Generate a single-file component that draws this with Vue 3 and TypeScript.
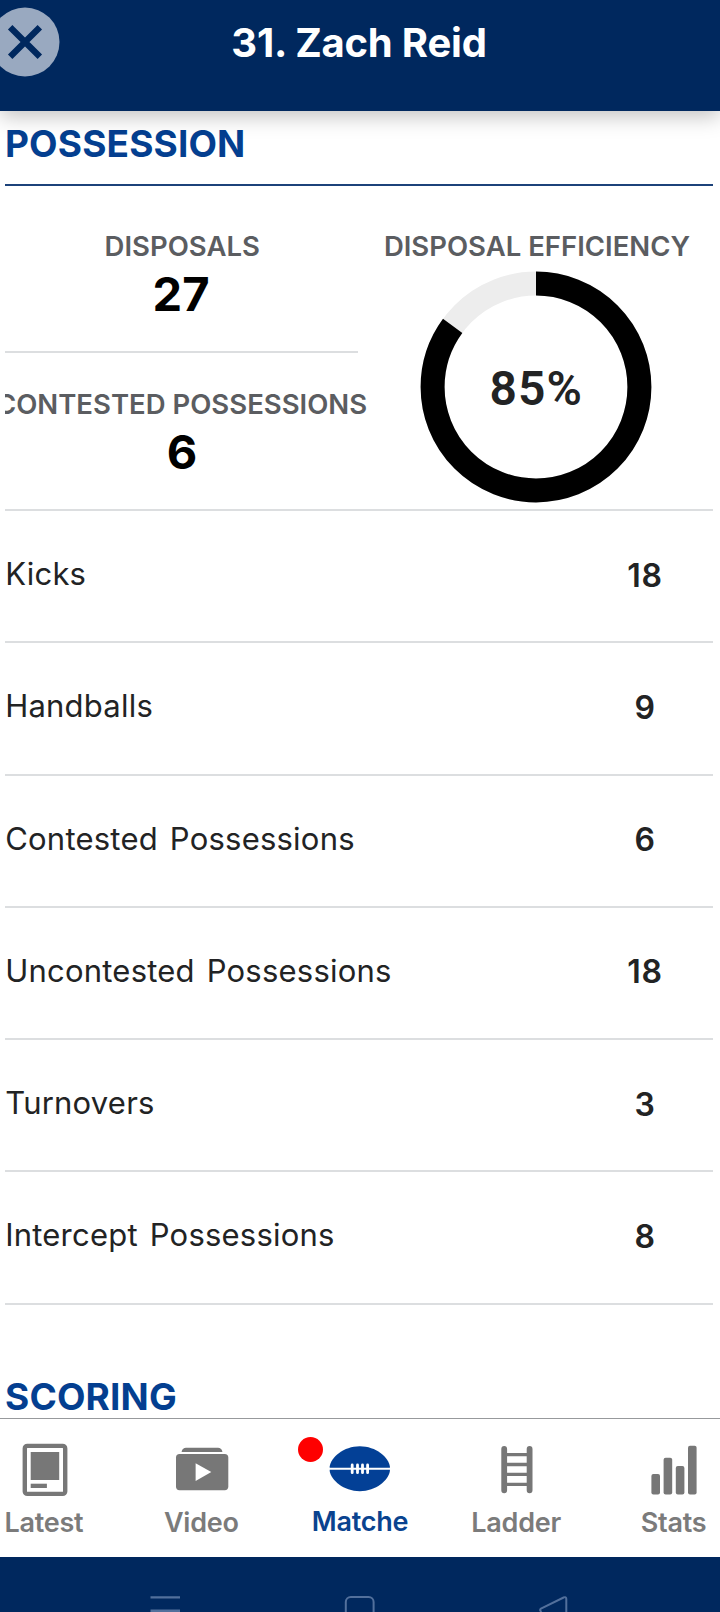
<script setup lang="ts">
interface StatRow {
  label: string
  value: number
}

const player = '31. Zach Reid'
const efficiency = 85
const radius = 103.4
const circumference = 2 * Math.PI * radius
const dash = `${(circumference * efficiency) / 100} ${circumference}`

const rows: StatRow[] = [
  { label: 'Kicks', value: 18 },
  { label: 'Handballs', value: 9 },
  { label: 'Contested Possessions', value: 6 },
  { label: 'Uncontested Possessions', value: 18 },
  { label: 'Turnovers', value: 3 },
  { label: 'Intercept Possessions', value: 8 },
]
</script>

<template>
  <div class="screen">
    <header class="header">
      <button class="close" aria-label="Close">
        <svg width="70" height="70" viewBox="0 0 70 70">
          <circle cx="35" cy="35" r="34.5" fill="#99a9c0" />
          <path d="M22.4 22.4 47.6 47.6M47.6 22.4 22.4 47.6" stroke="#00285e" stroke-width="6.3" stroke-linecap="square" />
        </svg>
      </button>
      <h1 class="title">{{ player }}</h1>
    </header>

    <main class="content">
      <h2 class="section possession">POSSESSION</h2>

      <section class="summary">
        <div class="left">
          <div class="cell first">
            <div class="label disposals">DISPOSALS</div>
            <div class="big">27</div>
          </div>
          <div class="cell second">
            <div class="label contested">CONTESTED POSSESSIONS</div>
            <div class="big">6</div>
          </div>
        </div>
        <div class="right">
          <div class="label efficiency">DISPOSAL EFFICIENCY</div>
          <div class="donut">
            <svg width="232" height="232" viewBox="0 0 232 232">
              <circle cx="116" cy="116" :r="radius" fill="none" stroke="#ededed" stroke-width="24" />
              <circle cx="116" cy="116" :r="radius" fill="none" stroke="#000" stroke-width="24" :stroke-dasharray="dash" transform="rotate(-90 116 116)" />
            </svg>
            <span class="percent">{{ efficiency }}%</span>
          </div>
        </div>
      </section>

      <ul class="rows">
        <li v-for="row in rows" :key="row.label" class="row">
          <span class="name">{{ row.label }}</span>
          <span class="value">{{ row.value }}</span>
        </li>
      </ul>

      <h2 class="section scoring">SCORING</h2>
    </main>

    <nav class="tabs">
      <div class="track">
        <div class="tab">
          <svg class="icon" viewBox="0 0 64 64">
            <rect x="11.8" y="8.9" width="40.4" height="48" rx="2.5" fill="none" stroke="#777" stroke-width="4.4" />
            <rect x="17.7" y="15" width="28.5" height="28" fill="#777" />
            <rect x="17.7" y="46.7" width="16.2" height="4.3" fill="#777" />
          </svg>
          <span class="caption">Latest</span>
        </div>
        <div class="tab">
          <svg class="icon" viewBox="0 0 64 64">
            <path d="M11.7 15V14.2Q12.6 10.7 16 10.7H48Q51.4 10.7 52.3 14.2V15Z" fill="#777" />
            <rect x="6" y="17" width="52.3" height="36.2" rx="3.6" fill="#777" />
            <path d="M25.6 26.2V44L41.3 35.1Z" fill="#fff" />
          </svg>
          <span class="caption">Video</span>
        </div>
        <div class="tab active">
          <svg class="icon" viewBox="0 0 64 64">
            <path d="M1.7 29.5C3 20.5 15.5 9.3 31.8 9.3S60.6 20.5 61.9 29.5V34C60.6 43 48.1 54.2 31.8 54.2S3 43 1.7 34Z" fill="#034096" />
            <path d="M1 31.7H62.6" stroke="#fff" stroke-width="2" />
            <path d="M24.2 28V35.7M29.5 28V35.7M34.5 28V35.7M39.6 28V35.7" stroke="#fff" stroke-width="2.8" stroke-linecap="round" />
          </svg>
          <i class="dot"></i>
          <span class="caption">Matche</span>
        </div>
        <div class="tab">
          <svg class="icon" viewBox="0 0 64 64">
            <path d="M19.2 12V53.3M44.6 12V53.3" stroke="#777" stroke-width="5.8" stroke-linecap="round" />
            <path d="M20 17.7H44M20 27.5H44M20 37.3H44M20 47.3H44" stroke="#777" stroke-width="3.3" />
          </svg>
          <span class="caption">Ladder</span>
        </div>
        <div class="tab">
          <svg class="icon" viewBox="0 0 64 64" fill="#777">
            <rect x="9.4" y="37" width="8.6" height="20.6" rx="2" />
            <rect x="21.6" y="20.7" width="8.6" height="36.9" rx="2" />
            <rect x="33.8" y="29" width="8.6" height="28.6" rx="2" />
            <rect x="46" y="8.7" width="8.6" height="48.9" rx="2" />
          </svg>
          <span class="caption">Stats</span>
        </div>
      </div>
    </nav>

    <footer class="system">
      <svg width="720" height="55" viewBox="0 0 720 55" fill="none" stroke="#52709c" stroke-width="2">
        <path d="M150.5 40.4H180M150.5 53.8H180" stroke-width="2.4" />
        <rect x="345.8" y="40" width="27.8" height="27.4" rx="5" />
        <path d="M566.3 60V42Q566.3 39.3 563.6 40.5L541 51.6Q539 53 541.5 55" />
      </svg>
    </footer>
  </div>
</template>

<style>
html,
body {
  margin: 0;
  background: #fff;
}
</style>

<style scoped>
.screen {
  display: flex;
  flex-direction: column;
  width: 720px;
  height: 1612px;
  overflow: hidden;
  background: #fff;
  font-family: Inter, 'Liberation Sans', sans-serif;
  color: #222324;
}

.header {
  position: relative;
  z-index: 1;
  display: flex;
  justify-content: center;
  box-sizing: border-box;
  flex: none;
  height: 110.5px;
  background: #00285e;
  box-shadow: 0 5px 20px rgba(0, 0, 0, 0.25);
}

.close {
  position: absolute;
  left: -10px;
  top: 7px;
  padding: 0;
  border: 0;
  background: none;
}

.close svg {
  display: block;
}

.title {
  margin: 0;
  padding-right: 2px;
  color: #fff;
  font-size: 40px;
  font-weight: 700;
  line-height: 86px;
  letter-spacing: -0.2px;
}

.content {
  flex: none;
  box-sizing: border-box;
  height: 1307.5px;
  padding: 0 7px 0 5px;
  overflow: hidden;
}

.section {
  margin: 0;
  color: #043f90;
  font-size: 37px;
  font-weight: 700;
  letter-spacing: 0.15px;
}

.possession {
  height: 73.5px;
  border-bottom: 2px solid #1c427a;
  line-height: 65px;
}

.summary {
  display: grid;
  grid-template-columns: 353px 352px;
  justify-content: space-between;
  box-sizing: border-box;
  height: 325px;
  border-bottom: 2px solid #dcdee0;
  overflow: hidden;
}

.cell {
  display: flex;
  flex-direction: column;
  align-items: center;
  box-sizing: border-box;
}

.first {
  height: 167px;
  padding-top: 40px;
  border-bottom: 2px solid #dcdee0;
}

.second {
  padding-top: 30.5px;
}

.label {
  color: #5b5d61;
  font-size: 27.5px;
  font-weight: 600;
  line-height: 40px;
  white-space: nowrap;
}

.disposals {
  padding-left: 1.5px;
}

.big {
  padding-right: 1px;
  color: #000;
  font-size: 47px;
  font-weight: 700;
  line-height: 55px;
}

.second .big {
  padding: 0 0 0 1px;
}

.right {
  display: flex;
  flex-direction: column;
  align-items: center;
  padding-top: 40px;
}

.donut {
  display: grid;
  place-items: center;
  margin-top: 5px;
  margin-right: 1.6px;
}

.donut > * {
  grid-area: 1 / 1;
}

.percent {
  padding-top: 3px;
  font-family: Roboto, sans-serif;
  font-size: 48px;
  font-weight: 600;
  letter-spacing: 1px;
}

.rows {
  margin: 0;
  padding: 0;
  list-style: none;
}

.row {
  display: flex;
  justify-content: space-between;
  align-items: center;
  box-sizing: border-box;
  height: 132.25px;
  padding-bottom: 4px;
  border-bottom: 2px solid #dcdee0;
}

.name {
  padding: 0 0 1px 0.2px;
  font-size: 31px;
  font-weight: 400;
  letter-spacing: 0.22px;
  word-spacing: 3px;
}

.value {
  width: 136px;
  padding-top: 2px;
  font-size: 32px;
  font-weight: 600;
  letter-spacing: 0.7px;
  text-align: center;
}

.scoring {
  padding-top: 62px;
  line-height: 60px;
}

.tabs {
  flex: none;
  box-sizing: border-box;
  height: 139px;
  border-top: 1px solid #97999c;
  background: #fff;
  overflow: hidden;
}

.track {
  display: flex;
  width: 787px;
  margin-left: -34px;
}

.tab {
  position: relative;
  display: flex;
  flex: 1;
  flex-direction: column;
  align-items: center;
  padding-top: 18px;
  color: #7b7b7b;
}

.icon {
  width: 64px;
  height: 64px;
}

.caption {
  margin-top: 3px;
  padding-right: 1.6px;
  font-size: 27px;
  font-weight: 600;
  line-height: 38px;
  letter-spacing: -0.25px;
}

.active {
  color: #0a438f;
}

.active .caption {
  margin-top: 2px;
  padding: 0 0 0 1px;
}

.dot {
  position: absolute;
  left: 17px;
  top: 18px;
  width: 25px;
  height: 25px;
  border-radius: 50%;
  background: #fe0000;
}

.system {
  flex: none;
  height: 55px;
  background: #00285e;
}

.system svg {
  display: block;
}
</style>
